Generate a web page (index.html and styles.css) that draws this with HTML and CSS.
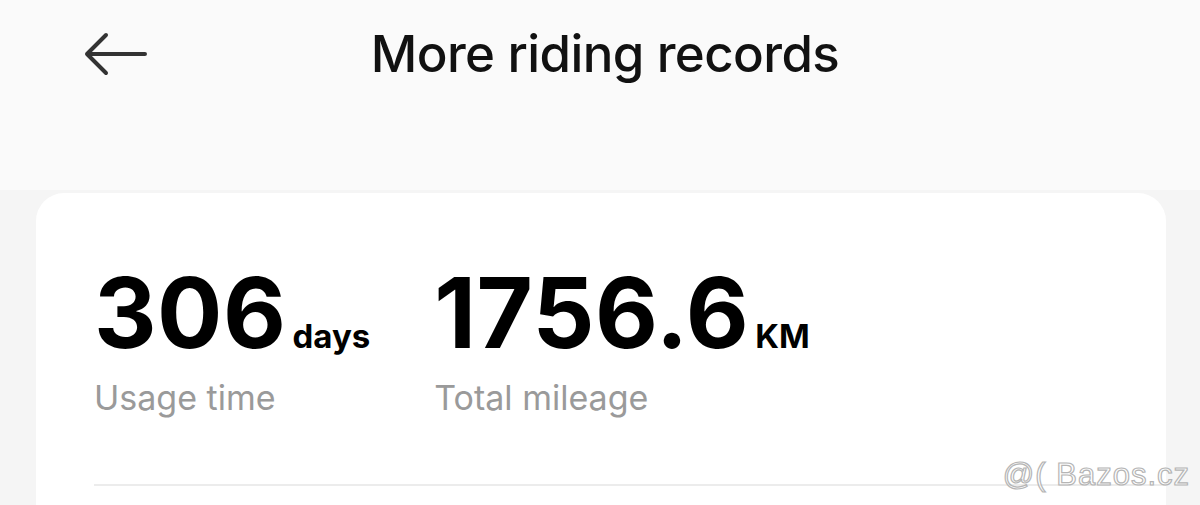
FILE: index.html
```html
<!DOCTYPE html>
<html>
<head>
  <meta charset="utf-8">
  <link rel="stylesheet" href="styles.css">
</head>
<body>

<div class="header">
  <div class="back">
    <svg width="66" height="46" viewBox="0 0 66 46">
      <path d="M63 23 H5 M24 4 L5 23 L24 42" fill="none" stroke="#333" stroke-width="4" stroke-linecap="round" stroke-linejoin="round"/>
    </svg>
  </div>
  <div class="title">More riding records</div>
</div>

<div class="content">
  <div class="card">
    <div class="stats">
      <div class="stat">
        <div class="value"><span class="num">306</span><span class="unit">days</span></div>
        <div class="label">Usage time</div>
      </div>
      <div class="stat">
        <div class="value"><span class="num">1756.6</span><span class="unit">KM</span></div>
        <div class="label">Total mileage</div>
      </div>
    </div>
    <div class="divider"></div>
  </div>
</div>

<div class="watermark">@( Bazos.cz</div>

</body>
</html>
```

FILE: styles.css
```css
body {
  margin: 0;
  font-family: "Inter", "Liberation Sans", sans-serif;
  background-color: #f5f5f5;
  height: 505px;
  overflow: hidden;
}

.header {
  height: 190px;
  background-color: #fafafa;
  position: relative;
}

.back {
  position: absolute;
  left: 82px;
  top: 31px;
}

.title {
  text-align: center;
  padding-top: 23px;
  padding-left: 10px;
  font-size: 51px;
  font-weight: 500;
  color: #111;
  letter-spacing: -0.6px;
}

.content {
  padding: 3px 34px 0 36px;
}

.card {
  background-color: #fff;
  border-radius: 28px 28px 0 0;
  height: 320px;
  padding: 0 0 0 58px;
}

.stats {
  display: flex;
  gap: 64px;
  padding-top: 68px;
}

.value {
  display: flex;
  align-items: baseline;
  color: #000;
  font-weight: 700;
}

.num {
  font-size: 97px;
  letter-spacing: 0.5px;
  line-height: 104px;
}

.unit {
  font-size: 33px;
  margin-left: 6px;
}

.label {
  font-size: 34px;
  color: #9a9a9a;
  margin-top: 12px;
}

.divider {
  margin-top: 66px;
  height: 2px;
  background-color: #ececec;
}

.watermark {
  position: absolute;
  right: 10px;
  top: 457px;
  font-family: "Liberation Sans", sans-serif;
  font-size: 31px;
  letter-spacing: 1px;
  color: rgba(255,255,255,0.6);
  -webkit-text-stroke: 1.2px #b5b5b5;
}
```
